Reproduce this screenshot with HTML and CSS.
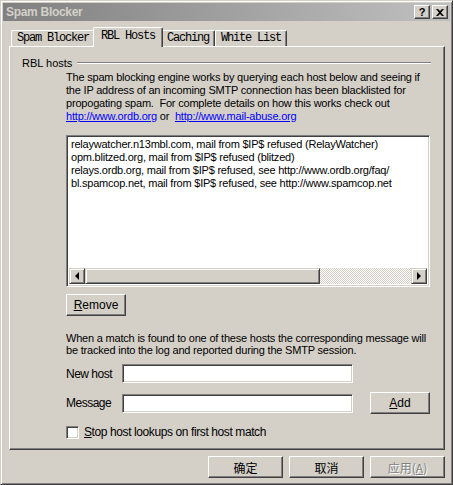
FILE: index.html
```html
<!DOCTYPE html>
<html>
<head>
<meta charset="utf-8">
<link rel="stylesheet" href="styles.css">
</head>
<body>
<div class="window">
  <div class="titlebar">
    <span class="title">Spam Blocker</span>
    <span class="tbtn help">?</span>
    <span class="tbtn close"><svg width="8" height="7" viewBox="0 0 8 7"><path d="M0 0h2l2 2 2-2h2L5 3.5 8 7H6L4 5 2 7H0l3-3.5z" fill="#000"/></svg></span>
  </div>
  <div class="content">
    <div class="tabs">
      <div class="tab">Spam Blocker</div>
      <div class="tab active">RBL Hosts</div>
      <div class="tab">Caching</div>
      <div class="tab">White List</div>
    </div>
    <div class="panel">
      <div class="group-head"><span>RBL hosts</span><div class="etch"></div></div>
      <div class="group-body">
        <p class="desc">The spam blocking engine works by querying each host below and seeing if<br>the IP address of an incoming SMTP connection has been blacklisted for<br>propogating spam.&nbsp; For complete details on how this works check out<br><a href="#">http://www.ordb.org</a> or&nbsp; <a href="#">http://www.mail-abuse.org</a></p>
        <div class="listbox">
          <div class="items">
            <div>relaywatcher.n13mbl.com, mail from $IP$ refused (RelayWatcher)</div>
            <div>opm.blitzed.org, mail from $IP$ refused (blitzed)</div>
            <div>relays.ordb.org, mail from $IP$ refused, see http://www.ordb.org/faq/</div>
            <div>bl.spamcop.net, mail from $IP$ refused, see http://www.spamcop.net</div>
          </div>
          <div class="hscroll">
            <div class="sbtn"><span class="arrow left"></span></div>
            <div class="thumb"></div>
            <div class="track"></div>
            <div class="sbtn"><span class="arrow right"></span></div>
          </div>
        </div>
        <button class="btn remove"><u>R</u>emove</button>
        <p class="desc2">When a match is found to one of these hosts the corresponding message will<br>be tracked into the log and reported during the SMTP session.</p>
        <div class="form">
          <label>New host</label><div class="input"></div><span></span>
          <label>Message</label><div class="input"></div><button class="btn add"><u>A</u>dd</button>
        </div>
        <div class="check"><span class="box"></span><span><u>S</u>top host lookups on first host match</span></div>
      </div>
    </div>
    <div class="footer">
      <button class="btn cjk">确定</button>
      <button class="btn cjk">取消</button>
      <button class="btn cjk disabled">应用(<u>A</u>)</button>
    </div>
  </div>
</div>
</body>
</html>
```
FILE: styles.css
```css
html, body { margin: 0; padding: 0; }
body { background: #d4d0c8; font-family: "Liberation Sans", Arial, sans-serif; font-size: 11px; color: #000; }
.window {
  width: 453px; height: 485px; box-sizing: border-box;
  background: #d4d0c8;
  border: 1px solid; border-color: #d4d0c8 #404040 #404040 #d4d0c8;
  box-shadow: inset 1px 1px #fff, inset -1px -1px #808080;
  padding: 2px;
  display: flex; flex-direction: column;
}
.titlebar {
  height: 18px; display: flex; align-items: center;
  background: linear-gradient(90deg, #808080, #c0c0c0);
  padding: 0 2px 0 3px;
}
.title { flex: 1; color: #d4d0c8; font-weight: bold; font-size: 12px; letter-spacing: -0.3px; }
.tbtn {
  width: 14px; height: 12px; background: #d4d0c8;
  border: 1px solid; border-color: #fff #404040 #404040 #fff;
  box-shadow: inset -1px -1px #808080;
  display: flex; align-items: center; justify-content: center;
  font-weight: bold; font-size: 11px; line-height: 12px;
}
.help { margin-right: 2px; }
.content { flex: 1; display: flex; flex-direction: column; padding: 6px 5px 0 6px; }
.tabs { display: flex; align-items: flex-end; padding-left: 2px; height: 19px; }
.tab {
  height: 16px; box-sizing: border-box;
  font-family: "Liberation Mono", monospace; font-size: 12px; letter-spacing: -1.2px;
  padding: 0 5px; line-height: 15px;
  border-top: 1px solid #fff; border-left: 1px solid #fff; border-right: 1px solid #404040;
  box-shadow: inset -1px 0 #808080;
  border-radius: 2px 2px 0 0;
}
.tab.active {
  height: 20px; margin: 0 -2px -1px; padding: 0 7px; line-height: 17px;
  position: relative; z-index: 1; background: #d4d0c8;
}
.panel {
  height: 404px; box-sizing: border-box;
  border: 1px solid; border-color: #fff #404040 #404040 #fff;
  box-shadow: inset -1px -1px #808080;
  padding: 9px 13px 0 12px;
}
.group-head { display: flex; align-items: center; gap: 5px; height: 13px; }
.etch { flex: 1; border-top: 1px solid #808080; border-bottom: 1px solid #fff; }
.group-body { margin-left: 44px; margin-right: 1px; }
p { margin: 0; }
.desc { margin-top: 2px; line-height: 13px; letter-spacing: -0.2px; white-space: nowrap; }
.desc a { color: #0000ff; }
.listbox {
  margin-top: 12px; height: 152px; box-sizing: border-box;
  background: #fff; border: 1px solid; border-color: #808080 #fff #fff #808080;
  box-shadow: inset 1px 1px #404040, inset -1px -1px #d4d0c8;
  padding: 2px; display: flex; flex-direction: column;
}
.items { flex: 1; padding: 0 2px; line-height: 13px; letter-spacing: -0.22px; white-space: nowrap; overflow: hidden; }
.hscroll { height: 16px; display: flex; }
.sbtn {
  width: 16px; height: 16px; box-sizing: border-box; background: #d4d0c8;
  border: 1px solid; border-color: #d4d0c8 #404040 #404040 #d4d0c8;
  box-shadow: inset 1px 1px #fff, inset -1px -1px #808080;
  display: flex; align-items: center; justify-content: center;
}
.arrow { width: 0; height: 0; border-top: 4px solid transparent; border-bottom: 4px solid transparent; }
.arrow.left { border-right: 4px solid #000; }
.arrow.right { border-left: 4px solid #000; }
.thumb {
  width: 235px; box-sizing: border-box; background: #d4d0c8;
  border: 1px solid; border-color: #d4d0c8 #404040 #404040 #d4d0c8;
  box-shadow: inset 1px 1px #fff, inset -1px -1px #808080;
}
.track { flex: 1; background: repeating-conic-gradient(#fff 0 25%, #d4d0c8 0 50%) 0 0 / 2px 2px; }
.btn {
  font-family: "Liberation Sans", Arial, sans-serif; font-size: 11px; color: #000;
  background: #d4d0c8; box-sizing: border-box; padding: 0;
  border: 1px solid; border-color: #fff #404040 #404040 #fff;
  box-shadow: inset -1px -1px #808080;
  display: flex; align-items: center; justify-content: center;
}
.remove { margin-top: 7px; width: 60px; height: 22px; font-size: 12px; }
.desc2 { margin-top: 16px; line-height: 12px; letter-spacing: -0.2px; white-space: nowrap; }
.form {
  margin-top: 8px;
  display: grid; grid-template-columns: 56px 231px 77px; row-gap: 9px; align-items: center;
}
.form label { font-size: 12px; letter-spacing: -0.5px; }
.input {
  height: 19px; box-sizing: border-box; background: #fff;
  border: 1px solid; border-color: #808080 #fff #fff #808080;
  box-shadow: inset 1px 1px #404040, inset -1px -1px #d4d0c8;
}
.add { width: 60px; height: 22px; font-size: 12px; margin-left: 17px; }
.check { margin-top: 11px; display: flex; align-items: center; gap: 5px; font-size: 12px; letter-spacing: -0.4px; }
.box {
  width: 13px; height: 13px; box-sizing: border-box; background: #fff;
  border: 1px solid; border-color: #808080 #fff #fff #808080;
  box-shadow: inset 1px 1px #404040, inset -1px -1px #d4d0c8;
}
.footer { display: flex; justify-content: flex-end; gap: 6px; padding-top: 6px; }
.cjk { width: 75px; height: 22px; font-family: "Noto Sans CJK SC", sans-serif; font-size: 12px; }
.disabled { color: #808080; text-shadow: 1px 1px #fff; }
```
